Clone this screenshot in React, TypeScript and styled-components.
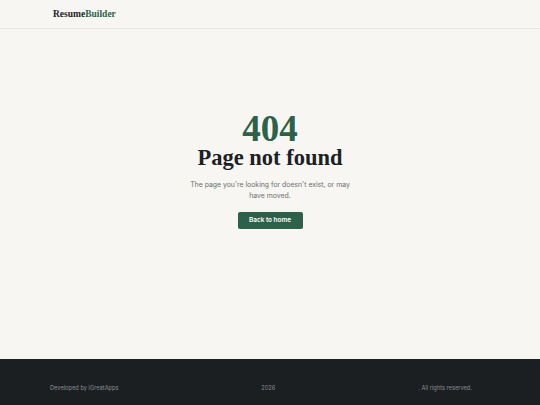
import { createGlobalStyle, styled } from "styled-components";

const colors = {
  page: "#f7f6f2",
  line: "#e9e7e1",
  ink: "#1d2125",
  green: "#2e6149",
  muted: "#6b6e70",
  footer: "#1b1f22",
  footerText: "#8b8e91",
};

const GlobalStyle = createGlobalStyle`
  html, body {
    margin: 0;
    padding: 0;
    background: ${colors.page};
    overflow: hidden;
  }
  * {
    box-sizing: border-box;
  }
`;

export default function App() {
  return (
    <>
      <GlobalStyle />
      <Page>
        <Header>
          <Logo>
            Resume<LogoAccent>Builder</LogoAccent>
          </Logo>
        </Header>
        <Main>
          <Code>404</Code>
          <Title>Page not found</Title>
          <Message>
            The page you're looking for doesn't exist, or may have moved.
          </Message>
          <HomeButton href="#">Back to home</HomeButton>
        </Main>
        <Footer>
          <FooterText>Developed by iGreatApps</FooterText>
          <FooterText>2026</FooterText>
          <FooterText>. All rights reserved.</FooterText>
        </Footer>
      </Page>
    </>
  );
}

const Page = styled.div`
  display: flex;
  flex-direction: column;
  width: 540px;
  height: 405px;
  background: ${colors.page};
`;

const Header = styled.header`
  display: flex;
  align-items: center;
  height: 29px;
  padding: 0 53px;
  border-bottom: 1px solid ${colors.line};
`;

const Logo = styled.div`
  font-family: "Liberation Serif", "DejaVu Serif", serif;
  font-weight: 700;
  font-size: 9.5px;
  color: ${colors.ink};
`;

const LogoAccent = styled.span`
  color: ${colors.green};
`;

const Main = styled.main`
  flex: 1;
  display: flex;
  flex-direction: column;
  align-items: center;
  padding-top: 82px;
`;

const Code = styled.div`
  font-family: "Liberation Serif", "DejaVu Serif", serif;
  font-weight: 700;
  font-size: 37px;
  line-height: 0.95;
  color: ${colors.green};
`;

const Title = styled.h1`
  margin: 0;
  font-family: "Liberation Serif", "DejaVu Serif", serif;
  font-weight: 700;
  font-size: 22.5px;
  line-height: 1.1;
  color: ${colors.ink};
`;

const Message = styled.p`
  margin: 8px 0 0;
  max-width: 168px;
  font-family: Inter, "Liberation Sans", sans-serif;
  font-size: 6.9px;
  line-height: 11px;
  text-align: center;
  color: ${colors.muted};
`;

const HomeButton = styled.a`
  display: flex;
  align-items: center;
  justify-content: center;
  margin-top: 11px;
  width: 65px;
  height: 17px;
  border-radius: 2px;
  background: ${colors.green};
  color: #ffffff;
  font-family: Inter, "Liberation Sans", sans-serif;
  font-size: 6.4px;
  font-weight: 600;
  text-decoration: none;
`;

const Footer = styled.footer`
  display: flex;
  justify-content: space-between;
  align-items: flex-start;
  height: 46px;
  padding: 25px 68px 0 50px;
  background: ${colors.footer};
`;

const FooterText = styled.span`
  font-family: Inter, "Liberation Sans", sans-serif;
  font-size: 5.7px;
  color: ${colors.footerText};
`;
